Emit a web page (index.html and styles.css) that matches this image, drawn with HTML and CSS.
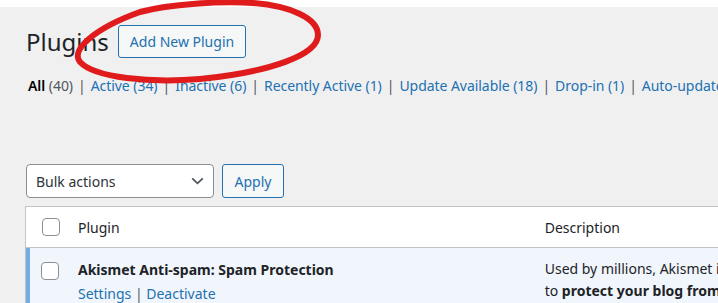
FILE: index.html
```html
<!DOCTYPE html>
<html lang="en">
<head>
<meta charset="utf-8">
<title>Plugins</title>
<link rel="stylesheet" href="styles.css">
</head>
<body>
<div class="topbar"></div>
<div class="wrap">
  <div class="head">
    <h1 class="title">Plugins</h1>
    <a class="btn-add" href="#">Add New Plugin</a>
  </div>
  <ul class="filters">
    <li><a class="current" href="#">All <span class="count">(40)</span></a><span class="sep">|</span></li>
    <li><a href="#">Active (34)</a><span class="sep">|</span></li>
    <li><a href="#">Inactive (6)</a><span class="sep">|</span></li>
    <li><a href="#">Recently Active (1)</a><span class="sep">|</span></li>
    <li><a href="#">Update Available (18)</a><span class="sep">|</span></li>
    <li><a href="#">Drop-in (1)</a><span class="sep">|</span></li>
    <li><a href="#">Auto-updates Disabled (40)</a></li>
  </ul>
  <div class="tablenav">
    <div class="select">
      <span>Bulk actions</span>
      <svg class="chev" width="13" height="8" viewBox="0 0 13 8"><path d="M1.2 1.3 L6.5 6.3 L11.8 1.3" fill="none" stroke="#50575e" stroke-width="1.8"/></svg>
    </div>
    <button class="btn-apply">Apply</button>
  </div>
  <table class="plugins">
    <thead>
      <tr>
        <td class="col-cb"><span class="cb"></span></td>
        <th class="col-name">Plugin</th>
        <th class="col-desc">Description</th>
      </tr>
    </thead>
    <tbody>
      <tr class="active">
        <th class="col-cb"><span class="cb"></span></th>
        <td class="col-name">
          <strong class="pname">Akismet Anti-spam: Spam Protection</strong>
          <div class="actions"><a href="#">Settings</a> | <a href="#">Deactivate</a></div>
        </td>
        <td class="col-desc">
          <p>Used by millions, Akismet is quite possibly the best way in the world</p>
          <p>to <strong>protect your blog from spam</strong>. It keeps your site protected</p>
        </td>
      </tr>
    </tbody>
  </table>
</div>
<svg class="scribble" width="718" height="303" viewBox="0 0 718 303">
  <path d="M140 12 C170 4, 220 1, 253 3 C290 6, 318 18, 318 35 C318 55, 270 72, 200 79 C150 83, 95 78, 80 62 C70 50, 95 28, 140 12 Z" fill="none" stroke="#e01b1b" stroke-width="6" stroke-linejoin="round"/>
</svg>
</body>
</html>
```

FILE: styles.css
```css
html, body {
  margin: 0;
  padding: 0;
}
body {
  background: #f0f0f1;
  font-family: "Noto Sans", "Open Sans", sans-serif;
  font-size: 14px;
  color: #1d2327;
  width: 718px;
  height: 303px;
  overflow: hidden;
  position: relative;
}
a {
  color: #2271b1;
  text-decoration: none;
}
.topbar {
  height: 7px;
  background: #fff;
}
.wrap {
  padding-left: 25px;
  width: 1000px;
}
.head {
  display: flex;
  align-items: center;
  gap: 9px;
  padding-top: 18px;
  padding-left: 1px;
  height: 33px;
}
.title {
  margin: 0;
  font-size: 24px;
  font-weight: 400;
  line-height: 33px;
  color: #1d2327;
}
.btn-add {
  display: inline-flex;
  align-items: center;
  height: 31px;
  padding: 0 11px;
  border: 1px solid #2271b1;
  border-radius: 3px;
  background: #f6f7f7;
  font-size: 14px;
}
.filters {
  list-style: none;
  margin: 18px 0 0 3px;
  padding: 0;
  display: flex;
  white-space: nowrap;
  line-height: 20px;
  letter-spacing: -0.05px;
}
.filters .current {
  color: #000;
  font-weight: 600;
}
.filters .count {
  color: #50575e;
  font-weight: 400;
}
.sep {
  color: #50575e;
  margin: 0 5px;
}
.tablenav {
  display: flex;
  gap: 8px;
  margin-top: 68px;
  padding-left: 1px;
  height: 34px;
}
.select {
  box-sizing: border-box;
  width: 188px;
  height: 34px;
  border: 1px solid #8c8f94;
  border-radius: 4px;
  background: #fff;
  display: flex;
  align-items: center;
  justify-content: space-between;
  padding: 0 9px 0 9px;
  color: #2c3338;
}
.chev {
  display: block;
}
.btn-apply {
  box-sizing: border-box;
  height: 34px;
  width: 62px;
  border: 1px solid #2271b1;
  border-radius: 3px;
  background: #f6f7f7;
  color: #2271b1;
  font-family: inherit;
  font-size: 14px;
  padding: 0;
}
.plugins {
  margin-top: 8px;
  border-collapse: collapse;
  width: 975px;
  background: #fff;
  border: 1px solid #c3c4c7;
  border-right: none;
}
.plugins thead th,
.plugins thead td {
  border-bottom: 1px solid #c3c4c7;
  height: 41px;
  box-sizing: border-box;
  padding: 0 10px;
  text-align: left;
  font-weight: 400;
  vertical-align: middle;
}
.plugins thead td.col-cb {
  padding: 0 0 0 16px;
}
.col-cb {
  width: 27px;
}
.col-name {
  width: 448px;
}
.cb {
  display: block;
  box-sizing: border-box;
  width: 18px;
  height: 18px;
  border: 1px solid #8c8f94;
  border-radius: 4px;
  background: #fff;
}
.plugins tbody tr.active {
  background: #f0f6fc;
}
.plugins tbody th,
.plugins tbody td {
  vertical-align: top;
  text-align: left;
  padding: 14px 10px 0;
}
.plugins tbody tr.active th.col-cb {
  box-shadow: inset 4px 0 0 #72aee6;
  padding: 14px 0 0 15px;
}
.pname {
  display: block;
  font-weight: 700;
  line-height: 20px;
  margin-top: -2px;
}
.actions {
  margin-top: 4px;
  line-height: 20px;
  color: #50575e;
}
.col-desc p {
  margin: -4px 0 0;
  line-height: 22px;
  white-space: nowrap;
}
.col-desc p + p {
  margin-top: 0;
}
.scribble {
  position: absolute;
  top: 0;
  left: 0;
  pointer-events: none;
}
```
